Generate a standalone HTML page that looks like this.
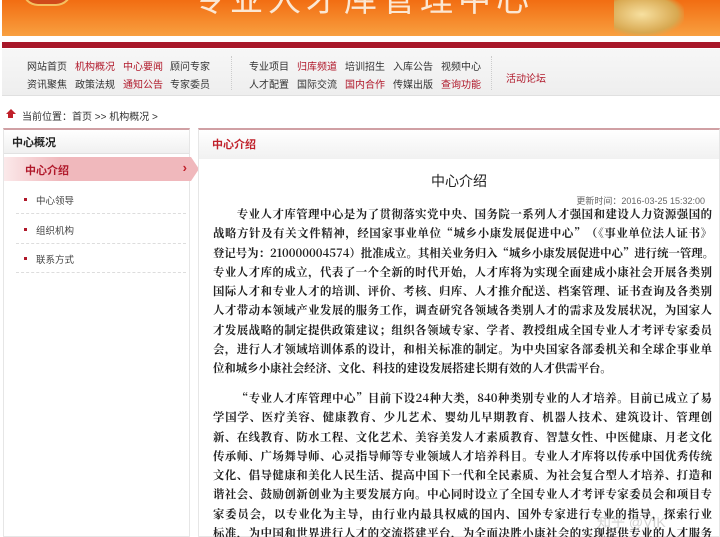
<!DOCTYPE html>
<html><head><meta charset="utf-8"><style>
*{margin:0;padding:0;box-sizing:border-box}
html,body{width:720px;height:537px;overflow:hidden}
body{background:#fff;font-family:"Liberation Sans","Noto Sans CJK SC",sans-serif;position:relative}
.ban{position:absolute;left:2px;top:0;width:718px;height:36px;background:linear-gradient(180deg,#f26d12,#f8a040);overflow:hidden}
.ban .t{position:absolute;left:190px;top:-20px;font-size:33px;line-height:40px;color:#fbe7d3;letter-spacing:5px;white-space:nowrap}
.ban .g{position:absolute;left:612px;top:0;width:70px;height:36px;background:radial-gradient(ellipse at 40% 40%,#f7e0a0,#d8a850 60%,transparent 75%)}
.ban .e{position:absolute;left:20px;top:-10px;width:50px;height:16px;border-radius:0 0 25px 25px;background:#d04a1a;border:2px solid #f5c060}
.red{position:absolute;left:2px;top:42px;width:718px;height:6px;background:#a8182a}
.nav{position:absolute;left:2px;top:49px;width:718px;height:47px;background:linear-gradient(#f7f7f7,#eeeeee);border-bottom:1px solid #e0e0e0}
.n{position:absolute;font-size:10px;color:#333;white-space:nowrap}
.n.r{color:#b0182a}
.sep{position:absolute;top:56px;height:34px;border-left:1px dotted #ccc}
.bc{position:absolute;left:22px;top:108px;font-size:10px;color:#333}
.home{position:absolute;left:6px;top:109px;width:0;height:0;border-left:5px solid transparent;border-right:5px solid transparent;border-bottom:5px solid #c0202a}
.home2{position:absolute;left:7.5px;top:114px;width:5px;height:4px;background:#c0202a}
.side{position:absolute;left:3px;top:128px;width:187px;height:409px;border:1px solid #e6e6e6;border-top:2px solid #d0a0a4;background:#fff}
.sh{height:24px;background:linear-gradient(#fff,#f0f0f0);border-bottom:1px solid #e2e2e2;font-size:11px;font-weight:bold;padding:4px 8px;color:#222}
.act{position:absolute;left:0;top:27px;width:187px;height:24px;background:linear-gradient(90deg,#fbe9ea,#f0b8bc 30%,#f0b8bc);font-size:11px;font-weight:bold;color:#b0182a;padding:5px 0 0 21px}
.act:after{content:"";position:absolute;right:-8px;top:0;border-top:12px solid transparent;border-bottom:12px solid transparent;border-left:8px solid #f0b8bc}
.act i{position:absolute;right:4px;top:3px;font-style:normal;font-size:13px;color:#c0202a}
.it{position:absolute;left:12px;width:170px;height:30px;border-bottom:1px dashed #ddd;font-size:9.5px;color:#444;padding:9px 0 0 20px}
.it:before{content:"";position:absolute;left:8px;top:14px;width:3px;height:3px;background:#b0182a}
.main{position:absolute;left:198px;top:128px;width:522px;height:409px;border:1px solid #e6e6e6;border-top:2px solid #d0a0a4}
.mh{height:29px;background:linear-gradient(#fff,#f1f1f1);font-size:11px;font-weight:bold;color:#c0202a;padding:6px 13px}
.ti{position:absolute;left:0;width:520px;top:41px;text-align:center;font-size:14px;color:#222}
.dt{position:absolute;right:14px;top:64px;font-size:9px;color:#666}
.tx{position:absolute;left:14px;width:499px;font-family:"Noto Serif CJK SC","Liberation Serif",serif;font-weight:bold;font-size:11.4px;color:#222;line-height:19.3px}
.tx div{text-align:justify;text-align-last:justify;white-space:nowrap;overflow:hidden;height:19.3px}
.tx div.l{text-align-last:left}
.wm{position:absolute;left:597px;top:512px;font-size:14px;color:rgba(180,180,180,.6)}
</style></head><body>
<div class="ban"><div class="e"></div><div class="t">专业人才库管理中心</div><div class="g"></div></div>
<div class="red"></div>
<div class="nav"></div>
<span class="n" style="left:27px;top:58px">网站首页</span><span class="n r" style="left:75px;top:58px">机构概况</span><span class="n r" style="left:123px;top:58px">中心要闻</span><span class="n" style="left:170px;top:58px">顾问专家</span>
<span class="n" style="left:27px;top:76px">资讯聚焦</span><span class="n" style="left:75px;top:76px">政策法规</span><span class="n r" style="left:123px;top:76px">通知公告</span><span class="n" style="left:170px;top:76px">专家委员</span>
<div class="sep" style="left:231px"></div>
<span class="n" style="left:249px;top:58px">专业项目</span><span class="n r" style="left:297px;top:58px">归库频道</span><span class="n" style="left:345px;top:58px">培训招生</span><span class="n" style="left:393px;top:58px">入库公告</span><span class="n" style="left:441px;top:58px">视频中心</span>
<span class="n" style="left:249px;top:76px">人才配置</span><span class="n" style="left:297px;top:76px">国际交流</span><span class="n r" style="left:345px;top:76px">国内合作</span><span class="n" style="left:393px;top:76px">传媒出版</span><span class="n r" style="left:441px;top:76px">查询功能</span>
<div class="sep" style="left:491px"></div>
<span class="n r" style="left:506px;top:70px">活动论坛</span>
<div class="home"></div><div class="home2"></div>
<div class="bc">当前位置：首页 &gt;&gt; 机构概况 &gt;</div>
<div class="side"><div class="sh">中心概况</div>
<div class="act">中心介绍<i>›</i></div>
<div class="it" style="top:54px">中心领导</div>
<div class="it" style="top:84px">组织机构</div>
<div class="it" style="top:113px">联系方式</div>
</div>
<div class="main"><div class="mh">中心介绍</div>
<div class="ti">中心介绍</div>
<div class="dt">更新时间：2016-03-25 15:32:00</div>
<div class="tx" style="top:75px">
<div>　　专业人才库管理中心是为了贯彻落实党中央、国务院一系列人才强国和建设人力资源强国的</div>
<div>战略方针及有关文件精神，经国家事业单位“城乡小康发展促进中心”（《事业单位法人证书》</div>
<div>登记号为：210000004574）批准成立。其相关业务归入“城乡小康发展促进中心”进行统一管理。</div>
<div>专业人才库的成立，代表了一个全新的时代开始，人才库将为实现全面建成小康社会开展各类别</div>
<div>国际人才和专业人才的培训、评价、考核、归库、人才推介配送、档案管理、证书查询及各类别</div>
<div>人才带动本领域产业发展的服务工作，调查研究各领域各类别人才的需求及发展状况，为国家人</div>
<div>才发展战略的制定提供政策建议；组织各领域专家、学者、教授组成全国专业人才考评专家委员</div>
<div>会，进行人才领域培训体系的设计，和相关标准的制定。为中央国家各部委机关和全球企事业单</div>
<div class="l">位和城乡小康社会经济、文化、科技的建设发展搭建长期有效的人才供需平台。</div>
</div>
<div class="tx" style="top:259px">
<div>　　“专业人才库管理中心”目前下设24种大类，840种类别专业的人才培养。目前已成立了易</div>
<div>学国学、医疗美容、健康教育、少儿艺术、婴幼儿早期教育、机器人技术、建筑设计、管理创</div>
<div>新、在线教育、防水工程、文化艺术、美容美发人才素质教育、智慧女性、中医健康、月老文化</div>
<div>传承师、广场舞导师、心灵指导师等专业领域人才培养科目。专业人才库将以传承中国优秀传统</div>
<div>文化、倡导健康和美化人民生活、提高中国下一代和全民素质、为社会复合型人才培养、打造和</div>
<div>谐社会、鼓励创新创业为主要发展方向。中心同时设立了全国专业人才考评专家委员会和项目专</div>
<div>家委员会，以专业化为主导，由行业内最具权威的国内、国外专家进行专业的指导，探索行业</div>
<div>标准，为中国和世界进行人才的交流搭建平台，为全面决胜小康社会的实现提供专业的人才服务</div>
<div class="l">功能。</div>
</div>
</div>
<div class="wm">知乎 @VIK</div>
</body></html>
